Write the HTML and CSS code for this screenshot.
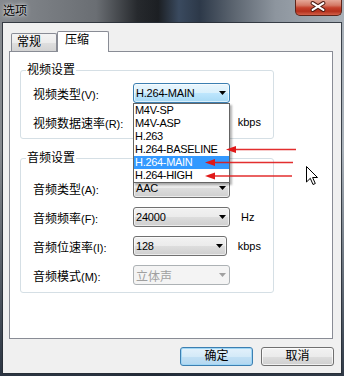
FILE: index.html
```html
<!DOCTYPE html>
<html lang="zh-CN">
<head>
    <meta charset="UTF-8">
    <meta name="viewport" content="width=device-width, initial-scale=1.0">
    <title>选项</title>
    <link rel="stylesheet" href="styles.css">
</head>
<body>
    <div class="janela">
        <!-- Barra de título com o botão de fechar -->
        <div class="titulo">
            <span class="titulo-texto">选项</span>
            <span class="fechar">
                <svg width="47" height="16" viewBox="0 0 47 16">
                    <path d="M18 3 L29 10 M29 3 L18 10" stroke="#4a1a12" stroke-width="4.2" stroke-linecap="round"/>
                    <path d="M18 3 L29 10 M29 3 L18 10" stroke="#ffffff" stroke-width="2.2" stroke-linecap="round"/>
                </svg>
            </span>
        </div>

        <div class="cliente">
            <!-- Abas do diálogo -->
            <div class="abas">
                <div class="aba">常规</div>
                <div class="aba ativa">压缩</div>
            </div>

            <div class="painel">
                <!-- Grupo de vídeo -->
                <fieldset class="grupo grupo-video">
                    <legend>视频设置</legend>
                    <div class="linha">
                        <label>视频类型<span class="tecla">(V):</span></label>
                        <div class="combo foco">
                            <span>H.264-MAIN</span>
                            <svg class="seta" width="7" height="4" viewBox="0 0 7 4"><path d="M0 0H7L3.5 4Z"/></svg>
                            <!-- Lista aberta do combo -->
                            <ul class="lista">
                                <li>M4V-SP</li>
                                <li>M4V-ASP</li>
                                <li>H.263</li>
                                <li>H.264-BASELINE</li>
                                <li class="marcado">H.264-MAIN</li>
                                <li>H.264-HIGH</li>
                            </ul>
                        </div>
                    </div>
                    <div class="linha">
                        <label>视频数据速率<span class="tecla">(R):</span></label>
                        <div class="campo"></div>
                        <span class="unidade">kbps</span>
                    </div>
                </fieldset>

                <!-- Grupo de áudio -->
                <fieldset class="grupo grupo-audio">
                    <legend>音频设置</legend>
                    <div class="linha">
                        <label>音频类型<span class="tecla">(A):</span></label>
                        <div class="combo">
                            <span>AAC</span>
                            <svg class="seta" width="7" height="4" viewBox="0 0 7 4"><path d="M0 0H7L3.5 4Z"/></svg>
                        </div>
                    </div>
                    <div class="linha">
                        <label>音频频率<span class="tecla">(F):</span></label>
                        <div class="combo">
                            <span>24000</span>
                            <svg class="seta" width="7" height="4" viewBox="0 0 7 4"><path d="M0 0H7L3.5 4Z"/></svg>
                        </div>
                        <span class="unidade">Hz</span>
                    </div>
                    <div class="linha">
                        <label>音频位速率<span class="tecla">(I):</span></label>
                        <div class="combo">
                            <span>128</span>
                            <svg class="seta" width="7" height="4" viewBox="0 0 7 4"><path d="M0 0H7L3.5 4Z"/></svg>
                        </div>
                        <span class="unidade">kbps</span>
                    </div>
                    <div class="linha">
                        <label>音频模式<span class="tecla">(M):</span></label>
                        <div class="combo desativado">
                            <span class="cjk">立体声</span>
                            <svg class="seta" width="7" height="4" viewBox="0 0 7 4"><path d="M0 0H7L3.5 4Z"/></svg>
                        </div>
                    </div>
                </fieldset>
            </div>

            <!-- Botões de confirmação -->
            <div class="botoes">
                <button class="botao padrao">确定</button>
                <button class="botao">取消</button>
            </div>
        </div>

        <!-- Setas vermelhas de anotação -->
        <svg class="setas" width="344" height="376" viewBox="0 0 344 376">
            <g stroke="#e01818" stroke-width="1.6" opacity="0.9">
                <line x1="235" y1="149.5" x2="296" y2="149.5"/>
                <line x1="214" y1="162.5" x2="293" y2="162.5"/>
                <line x1="214" y1="176" x2="292" y2="176"/>
            </g>
            <g fill="#e01818">
                <polygon points="226,149.5 236,146 236,153"/>
                <polygon points="205,162.5 215,159 215,166"/>
                <polygon points="205,176 215,172.5 215,179.5"/>
            </g>
        </svg>

        <!-- Ponteiro do mouse -->
        <svg class="cursor" width="14" height="20" viewBox="0 0 14 20">
            <path d="M0.5 0.5 L0.5 16 L4.3 12.3 L7 18.5 L9.3 17.5 L6.6 11.5 L11.5 11.5 Z" fill="#fff" stroke="#000" stroke-width="1"/>
        </svg>
    </div>
</body>
</html>
```

FILE: styles.css
```css
* {
    box-sizing: border-box; /* Bordas entram no tamanho */
}
body {
    margin: 0; /* Remove a margem padrão */
    width: 344px;
    height: 376px;
    overflow: hidden;
    font-family: "Liberation Sans", "Noto Sans CJK SC", sans-serif; /* Fonte do diálogo */
    font-size: 12px;
    color: #000;
}
.janela {
    position: relative; /* Referência para as setas e o cursor */
    width: 344px;
    height: 376px;
    padding: 0 3px 3px 3px; /* Moldura da janela */
    display: flex;
    flex-direction: column;
    background:
        linear-gradient(180deg, rgba(0, 0, 0, 0) 40%, rgba(34, 44, 58, 0.9) 100%),
        linear-gradient(90deg, #868a8f 0%, #6a6e73 28%, #26292d 40%, #1c1f23 46%, #3a4a5f 52%, #2d3949 58%, #5c6570 68%, #8d959e 80%, #a9b1b9 100%);
}
.titulo {
    height: 23px; /* Altura da barra de título */
    display: flex;
    align-items: flex-start;
}
.titulo-texto {
    padding-top: 4px;
    line-height: 14px;
    text-shadow: 0 0 5px rgba(255, 255, 255, 0.85), 0 0 2px rgba(255, 255, 255, 0.7); /* Brilho do Aero */
}
.fechar {
    margin-left: auto; /* Empurra o botão para a direita */
    margin-right: -1px;
    width: 47px;
    height: 16px;
    border: 1px solid #5e2419;
    border-top: none;
    border-radius: 0 0 5px 5px;
    background: linear-gradient(180deg, #e5a898 0%, #d47a66 35%, #c5412c 52%, #b5301c 75%, #d2604a 100%);
    display: flex;
}
.fechar svg {
    margin-left: -1px;
}
.cliente {
    flex: 1;
    background-color: #f0f0f0; /* Fundo do diálogo */
    padding: 8px 8px 0 6px;
    box-shadow: 0 0 0 1px rgba(40, 46, 54, 0.85);
}
.abas {
    display: flex;
    align-items: flex-end;
    height: 20px;
    padding-left: 2px;
}
.aba {
    width: 46px;
    height: 18px;
    border: 1px solid #898c95;
    border-bottom: none;
    border-radius: 2px 2px 0 0;
    background: linear-gradient(180deg, #f4f4f4 0%, #ececec 50%, #dfdfdf 51%, #d3d3d3 100%);
    padding-left: 5px;
    line-height: 16px;
}
.aba.ativa {
    width: 52px;
    height: 21px;
    margin-bottom: -1px; /* Cobre a borda do painel */
    position: relative;
    z-index: 1;
    background: #fff;
    padding-left: 7px;
}
.painel {
    width: 324px;
    height: 288px;
    border: 1px solid #898c95;
    background-color: #fff;
    padding: 11px 0 0 10px;
}
.grupo {
    width: 254px;
    margin: 0;
    padding: 6px 12px 6px 12px;
    border: 1px solid #d5dfe5; /* Borda clara do grupo */
    border-radius: 3px;
    min-inline-size: 0;
}
.grupo legend {
    margin-left: -7px;
    padding: 0 1px;
    line-height: 14px;
}
.grupo-audio {
    margin-top: 12px;
    padding-top: 13px;
    padding-bottom: 7px;
}
.linha {
    display: flex;
    align-items: center;
    height: 20px;
}
.linha + .linha {
    margin-top: 9px; /* Espaço entre as linhas */
}
.linha label {
    width: 100px;
    flex-shrink: 0;
    white-space: nowrap;
}
.tecla {
    font-size: 11px; /* Parte latina do rótulo */
}
.combo {
    position: relative; /* Referência para a lista aberta */
    width: 97px;
    height: 20px;
    border: 1px solid #707070;
    border-radius: 3px;
    background: linear-gradient(180deg, #f2f2f2 0%, #ebebeb 50%, #dddddd 51%, #cfcfcf 100%);
    box-shadow: inset 0 0 0 1px rgba(255, 255, 255, 0.6);
    display: flex;
    align-items: center;
    justify-content: space-between;
    padding: 0 3px 0 2px;
    font-size: 11px;
    letter-spacing: -0.2px;
}
.combo.foco {
    border-color: #3c7fb1; /* Combo com o mouse em cima */
    background: linear-gradient(180deg, #eaf6fd 0%, #d9f0fc 50%, #bee6fd 51%, #a7d9f5 100%);
}
.combo.desativado {
    border-color: #adb2b5;
    background: #f4f4f4;
    color: #a0a0a0;
    box-shadow: none;
}
.combo.desativado .seta {
    fill: #a0a0a0;
}
.cjk {
    font-size: 12px;
    letter-spacing: 0;
}
.campo {
    width: 97px;
    height: 20px;
    border: 1px solid #abadb3;
    background-color: #fff;
}
.unidade {
    margin-left: 11px;
    font-size: 11px;
}
.lista {
    position: absolute;
    top: 19px;
    left: -1px;
    width: 97px;
    margin: 0;
    padding: 0;
    list-style: none;
    border: 1px solid #646464;
    background-color: #fff;
    box-shadow: 2px 2px 2px rgba(0, 0, 0, 0.3);
    z-index: 5;
}
.lista li {
    height: 13px;
    line-height: 13px;
    padding-left: 1px;
    font-size: 11px;
    letter-spacing: -0.3px; /* Aproxima a largura do Tahoma */
    color: #000;
}
.lista li.marcado {
    background-color: #3399ff; /* Item selecionado */
    color: #fff;
}
.botoes {
    display: flex;
    justify-content: flex-end;
    gap: 8px;
    margin-top: 8px;
    margin-right: -1px;
}
.botao {
    width: 73px;
    height: 19px;
    padding: 0;
    border: 1px solid #707070;
    border-radius: 3px;
    background: linear-gradient(180deg, #f2f2f2 0%, #ebebeb 50%, #dddddd 51%, #cfcfcf 100%);
    box-shadow: inset 0 0 0 1px rgba(255, 255, 255, 0.7);
    font-family: inherit;
    font-size: 12px;
    line-height: 17px;
    color: #000;
}
.botao.padrao {
    border-color: #3c7fb1; /* Botão padrão destacado */
    background: linear-gradient(180deg, #e3f1fb 0%, #d4eaf8 50%, #c2e0f4 51%, #b3d7f0 100%);
    box-shadow: inset 0 0 0 1px #9fd6f5;
}
.setas {
    position: absolute;
    left: 0;
    top: 0;
    pointer-events: none;
    z-index: 10;
}
.cursor {
    position: absolute;
    left: 306px;
    top: 166px;
    z-index: 11;
}
```
